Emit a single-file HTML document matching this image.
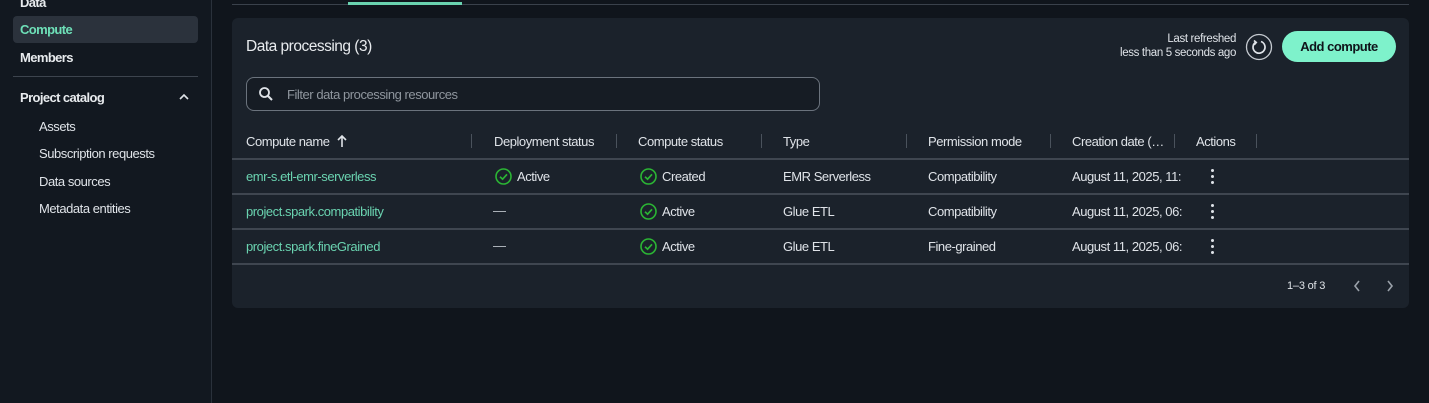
<!DOCTYPE html>
<html><head><meta charset="utf-8"><style>
*{margin:0;padding:0;box-sizing:border-box}
body{width:1429px;height:403px;background:#10151c;font-family:"Liberation Sans",sans-serif;color:#dfe3e8;position:relative;overflow:hidden;font-size:13px;letter-spacing:-0.45px}
.a{position:absolute;white-space:nowrap}
.side{position:absolute;left:0;top:0;width:212px;height:403px;background:#121820;border-right:1px solid #2a313b}
.b{font-weight:bold;color:#e8ebee;letter-spacing:-0.6px}
.sep{position:absolute;width:1px;height:14px;background:#4a525c;top:134px}
.hl{position:absolute;left:232px;width:1177px;height:2px;background:#3f4650}
.link{color:#6ad3b0}
.chk{position:absolute;width:17px;height:17px}
.dots{position:absolute;width:4px}
.dots i{display:block;width:3px;height:3px;border-radius:50%;background:#dfe3e8;margin-bottom:3px}
</style></head><body>
<div class="side"></div>
<div class="a b" style="left:20px;top:-5px;font-size:13px">Data</div>
<div class="a" style="left:13px;top:16px;width:185px;height:27px;background:#2b323c;border-radius:4px"></div>
<div class="a b" style="left:20px;top:22px;color:#6ee0b8">Compute</div>
<div class="a b" style="left:20px;top:50px">Members</div>
<div class="a" style="left:13px;top:76px;width:185px;height:1px;background:#3d444e"></div>
<div class="a b" style="left:20px;top:90px">Project catalog</div>
<svg class="a" style="left:178px;top:92px" width="12" height="10"><path d="M2 7 L6 3 L10 7" stroke="#dfe3e8" stroke-width="1.6" fill="none"/></svg>
<div class="a" style="left:39px;top:119px">Assets</div>
<div class="a" style="left:39px;top:146px">Subscription requests</div>
<div class="a" style="left:39px;top:174px">Data sources</div>
<div class="a" style="left:39px;top:201px">Metadata entities</div>

<div class="a" style="left:232px;top:4px;width:1177px;height:1px;background:#3a414b"></div>
<div class="a" style="left:348px;top:2px;width:114px;height:3px;background:#6ad3b0"></div>

<div class="a" style="left:232px;top:18px;width:1177px;height:290px;background:#1b222b;border-radius:6px"></div>
<div class="a" style="left:246px;top:38px;font-size:15.5px;letter-spacing:-0.5px;color:#e8ebee">Data processing (3)</div>
<div class="a" style="left:1100px;top:32px;width:136px;text-align:right;font-size:11.5px;letter-spacing:-0.35px;line-height:14px">Last refreshed<br>less than 5 seconds ago</div>
<svg class="a" style="left:1245px;top:33px" width="28" height="28"><circle cx="14" cy="14" r="12.5" stroke="#c5cad0" stroke-width="1.3" fill="none"/><path d="M10.5 9.3 A6 6 0 1 0 16 8.5" stroke="#dfe3e8" stroke-width="1.7" fill="none"/><path d="M9 7.5 L11.3 9.5 L9.2 11.8" stroke="#dfe3e8" stroke-width="1.6" fill="none"/></svg>
<div class="a" style="left:1282px;top:31px;width:114px;height:31px;border-radius:16px;background:#7ef2cb;color:#0f141a;font-weight:bold;font-size:13px;letter-spacing:-0.5px;text-align:center;line-height:31px">Add compute</div>

<div class="a" style="left:246px;top:77px;width:574px;height:34px;border:1px solid #6b737d;border-radius:8px;background:#161c24"></div>
<svg class="a" style="left:258px;top:86px" width="16" height="16"><circle cx="6.5" cy="6.5" r="4.5" stroke="#dfe3e8" stroke-width="1.8" fill="none"/><path d="M10 10 L14 14" stroke="#dfe3e8" stroke-width="2"/></svg>
<div class="a" style="left:287px;top:87px;color:#8f969e">Filter data processing resources</div>

<div class="a" style="left:246px;top:134px">Compute name</div>
<svg class="a" style="left:336px;top:134px" width="12" height="14"><path d="M6 13 V2 M2 6 L6 2 L10 6" stroke="#dfe3e8" stroke-width="1.6" fill="none"/></svg>
<div class="sep" style="left:471px"></div><div class="sep" style="left:616px"></div><div class="sep" style="left:761px"></div><div class="sep" style="left:906px"></div><div class="sep" style="left:1050px"></div><div class="sep" style="left:1174px"></div><div class="sep" style="left:1256px"></div>
<div class="a" style="left:494px;top:134px">Deployment status</div>
<div class="a" style="left:638px;top:134px">Compute status</div>
<div class="a" style="left:783px;top:134px">Type</div>
<div class="a" style="left:928px;top:134px">Permission mode</div>
<div class="a" style="left:1072px;top:134px">Creation date (…</div>
<div class="a" style="left:1196px;top:134px">Actions</div>
<div class="hl" style="top:158px"></div>
<div class="hl" style="top:193px"></div>
<div class="hl" style="top:228px"></div>
<div class="hl" style="top:263px"></div>

<div class="a link" style="left:246px;top:169px">emr-s.etl-emr-serverless</div>
<div class="a link" style="left:246px;top:204px">project.spark.compatibility</div>
<div class="a link" style="left:246px;top:239px">project.spark.fineGrained</div>

<svg class="chk" style="left:495px;top:168px" viewBox="0 0 17 17"><circle cx="8.5" cy="8.5" r="7.5" stroke="#2bb534" stroke-width="1.6" fill="none"/><path d="M5 8.7 L7.6 11.2 L12 6.3" stroke="#2bb534" stroke-width="1.7" fill="none"/></svg>
<div class="a" style="left:517px;top:169px">Active</div>
<div class="a" style="left:493px;top:211px;width:13px;height:1px;background:#aab0b7"></div>
<div class="a" style="left:493px;top:246px;width:13px;height:1px;background:#aab0b7"></div>
<svg class="chk" style="left:640px;top:168px" viewBox="0 0 17 17"><circle cx="8.5" cy="8.5" r="7.5" stroke="#2bb534" stroke-width="1.6" fill="none"/><path d="M5 8.7 L7.6 11.2 L12 6.3" stroke="#2bb534" stroke-width="1.7" fill="none"/></svg>
<div class="a" style="left:662px;top:169px">Created</div>
<svg class="chk" style="left:640px;top:203px" viewBox="0 0 17 17"><circle cx="8.5" cy="8.5" r="7.5" stroke="#2bb534" stroke-width="1.6" fill="none"/><path d="M5 8.7 L7.6 11.2 L12 6.3" stroke="#2bb534" stroke-width="1.7" fill="none"/></svg>
<div class="a" style="left:662px;top:204px">Active</div>
<svg class="chk" style="left:640px;top:238px" viewBox="0 0 17 17"><circle cx="8.5" cy="8.5" r="7.5" stroke="#2bb534" stroke-width="1.6" fill="none"/><path d="M5 8.7 L7.6 11.2 L12 6.3" stroke="#2bb534" stroke-width="1.7" fill="none"/></svg>
<div class="a" style="left:662px;top:239px">Active</div>

<div class="a" style="left:783px;top:169px">EMR Serverless</div>
<div class="a" style="left:783px;top:204px">Glue ETL</div>
<div class="a" style="left:783px;top:239px">Glue ETL</div>
<div class="a" style="left:928px;top:169px">Compatibility</div>
<div class="a" style="left:928px;top:204px">Compatibility</div>
<div class="a" style="left:928px;top:239px">Fine-grained</div>
<div class="a" style="left:1072px;top:169px">August 11, 2025, 11:</div>
<div class="a" style="left:1072px;top:204px">August 11, 2025, 06:</div>
<div class="a" style="left:1072px;top:239px">August 11, 2025, 06:</div>
<div class="dots" style="left:1211px;top:169px"><i></i><i></i><i></i></div>
<div class="dots" style="left:1211px;top:204px"><i></i><i></i><i></i></div>
<div class="dots" style="left:1211px;top:239px"><i></i><i></i><i></i></div>

<div class="a" style="left:1287px;top:280px;font-size:11px;letter-spacing:-0.2px">1–3 of 3</div>
<svg class="a" style="left:1352px;top:279px" width="10" height="14"><path d="M7 2 L3 7 L7 12" stroke="#9aa1a9" stroke-width="1.6" fill="none"/></svg>
<svg class="a" style="left:1385px;top:279px" width="10" height="14"><path d="M3 2 L7 7 L3 12" stroke="#9aa1a9" stroke-width="1.6" fill="none"/></svg>
</body></html>
